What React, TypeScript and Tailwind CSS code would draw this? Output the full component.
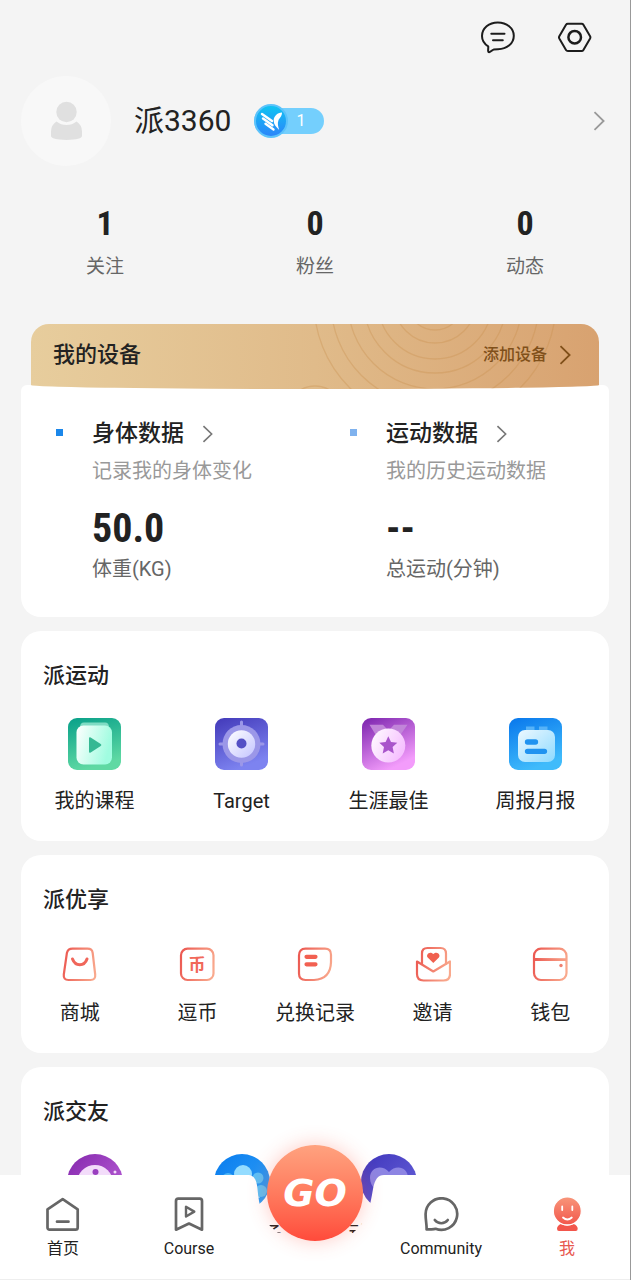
import type { ReactNode } from "react";

function Chevron({ className }: { className: string }) {
  return (
    <svg viewBox="0 0 12 20" fill="none" stroke="currentColor" strokeWidth="1.8" aria-hidden="true" className={className}>
      <path d="M1.5 1.2 10.6 10 1.5 18.8" />
    </svg>
  );
}

function LinearGradient({ id, from, to, x2 = "1", y2 = "1" }: { id: string; from: string; to: string; x2?: string; y2?: string }) {
  return (
    <linearGradient id={id} x1="0" y1="0" x2={x2} y2={y2}>
      <stop offset="0" stopColor={from} />
      <stop offset="1" stopColor={to} />
    </linearGradient>
  );
}

function ChatIcon() {
  return (
    <svg viewBox="0 0 34 34" className="size-[34px]" fill="none" stroke="#1c1c1c" strokeWidth="2" strokeLinecap="round" strokeLinejoin="round">
      <path d="M7.2 26.3C3.1 23.8 1 20 1 16 1 8.2 8 2.4 16.8 2.4S32.8 8 32.8 15.7 26 29.2 17 29.2c-1.500 0-3 .1-4.400.4-1.600.4-3.200 2.600-4.500 2.700-1.800.1-.5-4.500-.9-6z" />
      <path d="M10.300 13.700h13.200M12 20.200h9.800" />
    </svg>
  );
}

function SettingsIcon() {
  return (
    <svg viewBox="0 0 34 34" className="size-[34px]" fill="none" stroke="#1c1c1c" strokeWidth="2" strokeLinejoin="round">
      <path d="M9.800 3.700h13.800q1.200 0 1.800 1l6.700 11.500q.6 1.100 0 2.200L25.400 30q-.6 1-1.800 1H9.800q-1.200 0-1.800-1L1.300 18.400q-.6-1.100 0-2.200L8 4.700q.6-1 1.800-1z" />
      <circle cx="16.700" cy="17.200" r="6.300" strokeWidth="2.500" />
    </svg>
  );
}

function Avatar() {
  return (
    <svg viewBox="0 0 90 90" className="size-[90px]" aria-hidden="true">
      <circle cx="45" cy="45" r="45" fill="#f8f8f8" />
      <circle cx="45.500" cy="36" r="10.200" fill="#e0e0e0" />
      <path d="M35.500 45.500q4.500 3.500 10 3.500t10-3.500q5.500 3.500 5.500 10v4.500q0 3.500-15.500 4-15.500-.5-15.500-4v-4.500q0-6.500 5.500-10z" fill="#e0e0e0" />
    </svg>
  );
}

function LevelBadge() {
  return (
    <div className="flex h-[26px] w-[70px] items-center rounded-full bg-[#74cffd]">
      <svg viewBox="0 0 34 34" className="size-[34px] shrink-0" aria-hidden="true">
        <defs>
          <LinearGradient id="level" from="#10c6f2" to="#2c83fa" x2="0" />
        </defs>
        <circle cx="17" cy="17" r="16" fill="url(#level)" stroke="#5cc3fb" strokeWidth="2" />
        <g fill="none" stroke="#fff" strokeWidth="2.400" strokeLinecap="round">
          <path d="m8 10 10 7M9 14.500l9.500 6.700M11.500 19.800l8 5.700" />
        </g>
        <path d="M28 8.500c-5 .2-8.500 4-8.300 8.500.1 3.500 2.500 6 5.500 9-1-3.500-2-6.500-.8-9.500 1-2.500 3.600-4 3.600-8z" fill="#fff" />
      </svg>
      <span className="ml-2 text-base text-white">1</span>
    </div>
  );
}

function CourseTile() {
  return (
    <svg viewBox="0 0 53 52" className="h-[52px] w-[53px]">
      <defs>
        <LinearGradient id="course-bg" from="#08a089" to="#5fd9a3" x2="0.3" />
        <LinearGradient id="course-fg" from="#ffffff" to="#a0fce0" y2="0.300" />
      </defs>
      <rect width="53" height="52" rx="9" fill="url(#course-bg)" />
      <path d="M16 4.500h21q4 0 4 5H12q0-5 4-5z" fill="#7fdcc4" />
      <rect x="8.500" y="7.500" width="35.500" height="39" rx="7" fill="url(#course-fg)" />
      <path d="M21 20.500q0-2 1.700-1l10 6.500q1.500 1 0 2l-10 6.500q-1.700 1-1.700-1z" fill="#35b893" />
    </svg>
  );
}

function TargetTile() {
  return (
    <svg viewBox="0 0 53 52" className="h-[52px] w-[53px]">
      <defs>
        <LinearGradient id="target-bg" from="#4239b9" to="#7d83f0" x2="0.4" />
        <LinearGradient id="target-fg" from="#ffffff" to="#c3c4ff" />
      </defs>
      <rect width="53" height="52" rx="9" fill="url(#target-bg)" />
      <circle cx="26.500" cy="26" r="19" fill="#9b97e8" />
      <path d="M26.500 4v6M26.500 42v5M5 26h5M43 26h5" stroke="#9b97e8" strokeWidth="3" strokeLinecap="round" />
      <circle cx="26.500" cy="26" r="13.700" fill="url(#target-fg)" />
      <circle cx="26.500" cy="25.500" r="5" fill="#5450c5" />
    </svg>
  );
}

function MedalTile() {
  return (
    <svg viewBox="0 0 53 52" className="h-[52px] w-[53px]">
      <defs>
        <LinearGradient id="medal-bg" from="#7a22ad" to="#f39cfb" x2="0.5" />
        <LinearGradient id="medal-fg" from="#ffffff" to="#f6c0ff" y2="0.500" />
      </defs>
      <rect width="53" height="52" rx="9" fill="url(#medal-bg)" />
      <path d="M7.500 6.700H21l5.500 6 5.500-6h13.500L37 19H15z" fill="#c185d9" />
      <circle cx="26.300" cy="27.500" r="17" fill="url(#medal-fg)" />
      <path d="m26.300 18.200 2.700 5.900 6.300.7-4.700 4.300 1.300 6.300-5.600-3.200-5.600 3.200 1.300-6.300-4.700-4.300 6.300-.7z" fill="#a954cb" />
    </svg>
  );
}

function ReportTile() {
  return (
    <svg viewBox="0 0 53 52" className="h-[52px] w-[53px]">
      <defs>
        <LinearGradient id="report-bg" from="#0877ec" to="#40bbfb" x2="0.4" />
        <LinearGradient id="report-fg" from="#ecf8ff" to="#8edaff" />
      </defs>
      <rect width="53" height="52" rx="9" fill="url(#report-bg)" />
      <path d="M17 8.500h8.500v6H17zM30 8.500h8.500v6H30z" fill="#55b2f8" />
      <rect x="9" y="12" width="37" height="32" rx="7" fill="url(#report-fg)" />
      <path d="M18.500 24h8M18.500 33.300h17" stroke="#2093f0" strokeWidth="5.300" strokeLinecap="round" />
    </svg>
  );
}

function OutlineIcon({ id, children }: { id: string; children: ReactNode }) {
  return (
    <svg viewBox="0 0 36 36" className="size-9" fill="none" stroke={`url(#${id})`} strokeWidth="2.200" strokeLinejoin="round" strokeLinecap="round">
      <defs>
        <linearGradient id={id} gradientUnits="userSpaceOnUse" x1="1" y1="14" x2="35" y2="22">
          <stop offset="0" stopColor="#ec5a52" />
          <stop offset="1" stopColor="#f9a98d" />
        </linearGradient>
      </defs>
      {children}
    </svg>
  );
}

function MallIcon() {
  return (
    <OutlineIcon id="mall">
      <path d="M10.500 2.700h15q4.700 0 5.200 4.300l2.500 21.500q.6 5.500-4.700 5.500h-22q-5.300 0-4.700-5.500L4.900 7q.9-4.300 5.600-4.300z" />
      <path d="M10.500 13c1.500 4 4.500 5.700 7.300 5.700s5.800-1.700 7.200-5.700" stroke="#f0665a" strokeWidth="3" />
    </OutlineIcon>
  );
}

function CoinIcon() {
  return (
    <OutlineIcon id="coin">
      <rect x="2" y="2.700" width="32.500" height="31.300" rx="6.500" />
      <text x="18" y="24.500" textAnchor="middle" stroke="none" fill="#f1685a" className="text-[17px] font-bold">
        币
      </text>
    </OutlineIcon>
  );
}

function RecordIcon() {
  return (
    <OutlineIcon id="record">
      <path d="M8.500 2.700H28q6 0 6 6v7.500Q33.500 33 17 34H8.500Q2 34 2 27.500v-18Q2 2.700 8.500 2.700z" />
      <path d="M9.500 10.800h9M9.500 18.300h9" stroke="#f26051" strokeWidth="4.200" />
    </OutlineIcon>
  );
}

function InviteIcon() {
  return (
    <OutlineIcon id="invite">
      <path d="M7 18V7.500Q7 2 12.500 2h13Q31 2 31 7.500V18" />
      <path d="M2 15.500 18.300 25.500 35 15.500V28q0 6.500-6.500 6.500h-20Q2 34.500 2 28z" />
      <path d="M18.300 17 12.700 11.500C10.500 8.800 14.500 4.500 18.300 8c3.800-3.500 7.800.8 5.600 3.500z" fill="#f0604f" stroke="none" />
    </OutlineIcon>
  );
}

function WalletIcon() {
  return (
    <OutlineIcon id="wallet">
      <rect x="2" y="2.700" width="32.500" height="31.300" rx="7" />
      <path d="M2.500 13.500 34 13.600" strokeWidth="2.800" strokeLinecap="butt" />
      <circle cx="29" cy="19.500" r="1.700" fill="#f0816f" stroke="none" />
    </OutlineIcon>
  );
}

function CookieBadge() {
  return (
    <svg viewBox="0 0 56 56" className="size-14">
      <defs>
        <LinearGradient id="cookie" from="#8427ad" to="#c068dc" />
      </defs>
      <circle cx="28" cy="28" r="28" fill="url(#cookie)" />
      <circle cx="28" cy="29" r="18" fill="#f3dcfa" />
      <circle cx="28.500" cy="18" r="3" fill="#9a3fc0" />
      <circle cx="48" cy="18" r="1.500" fill="#f3dcfa" />
    </svg>
  );
}

function PeopleBadge() {
  return (
    <svg viewBox="0 0 56 56" className="size-14">
      <defs>
        <LinearGradient id="people" from="#087bee" to="#35a5f8" />
      </defs>
      <circle cx="28" cy="28" r="28" fill="url(#people)" />
      <circle cx="14" cy="25" r="6" fill="#4fb6f5" />
      <circle cx="44" cy="24" r="5.500" fill="#5dc0f6" />
      <circle cx="29" cy="20" r="9" fill="#94dcff" />
      <path d="M12 44q3-15 17-15t17 15z" fill="#7dccfa" />
      <circle cx="47" cy="37" r="6" fill="#5dc0f6" />
    </svg>
  );
}

function HeartBadge() {
  return (
    <svg viewBox="0 0 56 56" className="size-14">
      <defs>
        <LinearGradient id="heart" from="#3f35bb" to="#6a66dc" />
      </defs>
      <circle cx="28" cy="28" r="28" fill="url(#heart)" />
      <path d="M28 18C21 10 9 13 9 24c0 9 8 15 19 23 11-8 19-14 19-23 0-11-12-14-19-6z" fill="#8d85e3" />
    </svg>
  );
}

function HomeIcon() {
  return (
    <svg viewBox="0 0 36 36" className="size-9" fill="none" stroke="#666" strokeWidth="2.700" strokeLinejoin="round" strokeLinecap="round">
      <path d="M17.700 2.200 32.700 12.300V30.500q0 2.200-2.200 2.200H4.700q-2.200 0-2.200-2.200V12.300z" />
      <path d="M12 24.700h11.500" />
    </svg>
  );
}

function BookmarkIcon() {
  return (
    <svg viewBox="0 0 36 36" className="size-9" fill="none" stroke="#666" strokeWidth="2.700" strokeLinejoin="round" strokeLinecap="round">
      <path d="M7.200 1.700h21.600q2.200 0 2.200 2.200V32.700L18 26.500 5 32.700V3.900q0-2.200 2.200-2.200z" />
      <path d="M15 9.800v9.700l8.300-4.900z" strokeWidth="2.400" />
    </svg>
  );
}

function SmileBubbleIcon() {
  return (
    <svg viewBox="0 0 36 36" className="size-9" fill="none" stroke="#666" strokeWidth="2.700" strokeLinejoin="round" strokeLinecap="round">
      <path d="M2.600 17.500a15.800 15.800 0 1 1 10 14.300c-2.500 1-5.500.2-9 .6.200-5-1-9-1-14.900z" />
      <path d="M11.800 23c3.500 4.300 9.500 4.300 13 0" />
    </svg>
  );
}

function MeIcon() {
  return (
    <svg viewBox="0 0 36 36" className="size-9" fill="none">
      <defs>
        <LinearGradient id="me" from="#f8967a" to="#f2574c" x2="0" />
      </defs>
      <path d="M12 27q6 3.500 12.600 0 4 1.500 4.100 4.800 0 2.200-2 2.200H10q-2 0-2-2.200.1-3.300 4-4.800z" fill="#f2564c" />
      <circle cx="18.300" cy="13.900" r="14" fill="url(#me)" stroke="#fff" strokeWidth="1.200" />
      <path d="M13.200 9.500v3.500M23.300 9.500v3.500M14 20.500c2.800 2.500 6 2.500 8.800 0" stroke="#fff" strokeWidth="1.800" strokeLinecap="round" />
    </svg>
  );
}

const stats = [
  { value: "1", label: "关注" },
  { value: "0", label: "粉丝" },
  { value: "0", label: "动态" },
];

const metrics = [
  { title: "身体数据", note: "记录我的身体变化", value: "50.0", unit: "体重(KG)", dot: "bg-[#1b87ea]" },
  { title: "运动数据", note: "我的历史运动数据", value: "--", unit: "总运动(分钟)", dot: "bg-[#7fb2ee]" },
];

const sports = [
  { label: "我的课程", icon: <CourseTile /> },
  { label: "Target", icon: <TargetTile /> },
  { label: "生涯最佳", icon: <MedalTile /> },
  { label: "周报月报", icon: <ReportTile /> },
];

const perks = [
  { label: "商城", icon: <MallIcon /> },
  { label: "逗币", icon: <CoinIcon /> },
  { label: "兑换记录", icon: <RecordIcon /> },
  { label: "邀请", icon: <InviteIcon /> },
  { label: "钱包", icon: <WalletIcon /> },
];

const friends = [
  { label: "派友", icon: <CookieBadge /> },
  { label: "我的圈子", icon: <PeopleBadge /> },
  { label: "动态消息", icon: <HeartBadge /> },
];

function Section({ title, children }: { title: string; children: ReactNode }) {
  return (
    <section className="mt-3.5 rounded-[20px] bg-white pt-[29px] pb-[26px]">
      <h2 className="px-[22px] text-[22px] leading-8 font-medium">{title}</h2>
      {children}
    </section>
  );
}

function Tab({ label, icon, active = false }: { label: string; icon: ReactNode; active?: boolean }) {
  return (
    <a href="#" aria-current={active ? "page" : undefined} className="flex flex-col items-center pt-[22px]">
      {icon}
      <span className={active ? "mt-1.5 text-base leading-5 text-[#e8584f]" : "mt-1.5 text-base leading-5"}>{label}</span>
    </a>
  );
}

function TabBar() {
  return (
    <nav className="absolute inset-x-0 bottom-0 h-[105px]">
      <div className="absolute inset-0 flex">
        <div className="flex-1 bg-white" />
        <svg viewBox="0 0 150 105" className="h-[105px] w-[150px]" aria-hidden="true">
          <path d="M0 0H7C14 0 16.500 4 17.500 14 19 32 23 44 31 52L38 58H113L119 52C127 44 130 32 133 14 135 4 138 0 144 0H150V105H0z" fill="#fff" />
        </svg>
        <div className="flex-1 bg-white" />
      </div>
      <div className="relative grid h-full grid-cols-5 border-b border-[#eeeeee]">
        <Tab label="首页" icon={<HomeIcon />} />
        <Tab label="Course" icon={<BookmarkIcon />} />
        <div className="flex justify-center">
          <button
            type="button"
            className="-mt-[30px] flex size-24 items-center justify-center rounded-full bg-linear-to-b from-[#ffa27f] to-[#ff4a3b] font-['DejaVu_Sans'] text-[38px] font-bold text-white italic shadow-[0_0_20px_rgba(255,80,60,0.3)]"
          >
            GO
          </button>
        </div>
        <Tab label="Community" icon={<SmileBubbleIcon />} />
        <Tab label="我" icon={<MeIcon />} active />
      </div>
    </nav>
  );
}

export default function App() {
  return (
    <div className="relative h-dvh overflow-hidden border-r border-[#999999] bg-[#f4f4f4] font-[Roboto,'Noto_Sans_CJK_SC',sans-serif] text-[#222222]">
      <main className="h-full overflow-y-auto pb-[105px] [scrollbar-width:none]">
        <header>
          <div className="flex h-[75px] items-center justify-end gap-[43px] pr-[38px] pb-0.5">
            <button type="button" aria-label="Messages">
              <ChatIcon />
            </button>
            <button type="button" aria-label="Settings">
              <SettingsIcon />
            </button>
          </div>
          <a href="#" className="flex h-[92px] items-center pr-[25px] pl-[21px]">
            <Avatar />
            <h1 className="ml-[23px] text-3xl leading-10">派3360</h1>
            <div className="ml-[23px]">
              <LevelBadge />
            </div>
            <Chevron className="ml-auto h-5 w-3 text-[#999999]" />
          </a>
          <dl className="grid grid-cols-3 pt-9 pb-[43px] text-center">
            {stats.map((s) => (
              <div key={s.label} className="flex flex-col-reverse gap-2.5">
                <dt className="text-[19px] leading-7 text-[#666666]">{s.label}</dt>
                <dd className="font-['Roboto_Condensed',Roboto,sans-serif] text-[34px] leading-10 font-bold">{s.value}</dd>
              </div>
            ))}
          </dl>
        </header>

        <div className="px-[21px]">
          <section>
            <div className="relative z-10 mx-2.5 -mb-1 flex h-[65px] items-center justify-between overflow-hidden rounded-[18px_18px_50%_50%/18px_18px_4px_4px] bg-linear-to-r from-[#e7cd9d] via-[#e0bb8a] to-[#d8a270] pr-7 pb-[3px] pl-[22px]">
              <svg viewBox="0 0 300 65" className="absolute top-0 right-0 h-[65px] w-[300px]" fill="none" stroke="#c98f4c" strokeOpacity="0.350" strokeWidth="1.300" aria-hidden="true">
                {[28, 41, 57, 71, 87, 104, 121].map((r) => (
                  <circle key={r} cx="136" cy="-22" r={r} />
                ))}
                <circle cx="16" cy="90" r="28" />
              </svg>
              <h2 className="relative text-[22px] leading-8 font-medium">我的设备</h2>
              <a href="#" className="relative flex items-center gap-3 text-base leading-6 font-medium text-[#80501a]">
                添加设备
                <Chevron className="h-5 w-3" />
              </a>
            </div>
            <div className="grid grid-cols-2 rounded-t-md rounded-b-[20px] bg-white pt-[33px] pb-[34px]">
              {metrics.map((m) => (
                <a href="#" key={m.title} className="flex gap-[29px] pl-[35px]">
                  <span className={`mt-[11px] size-[7px] shrink-0 ${m.dot}`} />
                  <div>
                    <h3 className="flex items-center gap-[18px] text-[23px] leading-8 font-medium">
                      {m.title}
                      <Chevron className="h-[18px] w-[11px] text-[#777777]" />
                    </h3>
                    <p className="mt-[7px] text-xl leading-7 text-[#999999]">{m.note}</p>
                    <p className="mt-5 font-['Roboto_Condensed',Roboto,sans-serif] text-[40px] leading-[48px] font-bold">{m.value}</p>
                    <p className="mt-0.5 text-xl leading-7 text-[#666666]">{m.unit}</p>
                  </div>
                </a>
              ))}
            </div>
          </section>

          <Section title="派运动">
            <div className="mt-[26px] grid grid-cols-4">
              {sports.map((item) => (
                <a href="#" key={item.label} className="flex flex-col items-center gap-[17px] text-xl leading-7">
                  {item.icon}
                  {item.label}
                </a>
              ))}
            </div>
          </Section>

          <Section title="派优享">
            <div className="mt-[30px] grid grid-cols-5">
              {perks.map((item) => (
                <a href="#" key={item.label} className="flex flex-col items-center gap-[17px] text-xl leading-7">
                  {item.icon}
                  {item.label}
                </a>
              ))}
            </div>
          </Section>

          <Section title="派交友">
            <div className="mt-[26px] grid grid-cols-4">
              {friends.map((item) => (
                <a href="#" key={item.label} className="flex flex-col items-center gap-2.5 text-xl leading-7">
                  {item.icon}
                  {item.label}
                </a>
              ))}
            </div>
          </Section>
        </div>
      </main>
      <TabBar />
    </div>
  );
}
